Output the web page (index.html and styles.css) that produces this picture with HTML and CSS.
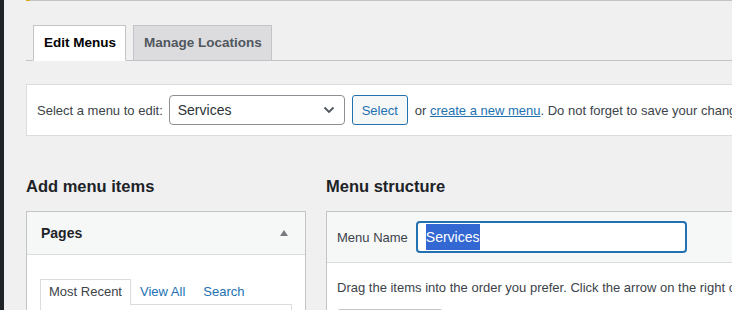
FILE: index.html
```html
<!DOCTYPE html>
<html lang="en">
<head>
    <meta charset="UTF-8">
    <meta name="viewport" content="width=device-width, initial-scale=1.0">
    <title>Menus</title>
    <link rel="stylesheet" href="styles.css">
</head>
<body>
    <div class="admin">
        <div class="admin-edge"></div>

        <div class="wrap">
            <!-- bottom edge of the notice above -->
            <div class="notice-edge"></div>

            <nav class="nav-tabs">
                <a class="nav-tab active" href="#">Edit Menus</a>
                <a class="nav-tab" href="#">Manage Locations</a>
            </nav>

            <div class="manage-menus">
                <span class="select-label">Select a menu to edit:</span>
                <div class="select-box">
                    <span>Services</span>
                    <svg width="12" height="8" viewBox="0 0 12 8"><path d="M1.5 1.5 L6 6 L10.5 1.5" fill="none" stroke="#50575e" stroke-width="1.8"/></svg>
                </div>
                <button class="btn-select">Select</button>
                <span class="manage-text">or <a href="#">create a new menu</a>. Do not forget to save your changes!</span>
            </div>

            <div class="columns">
                <!-- Add menu items -->
                <div class="col-left">
                    <h2>Add menu items</h2>
                    <div class="postbox">
                        <div class="postbox-header">
                            <h3>Pages</h3>
                            <span class="toggle-arrow"></span>
                        </div>
                        <div class="postbox-inside">
                            <ul class="tabs">
                                <li class="active">Most Recent</li>
                                <li><a href="#">View All</a></li>
                                <li><a href="#">Search</a></li>
                            </ul>
                            <div class="tab-panel"></div>
                        </div>
                    </div>
                </div>

                <!-- Menu structure -->
                <div class="col-right">
                    <h2>Menu structure</h2>
                    <div class="menu-box">
                        <div class="menu-header">
                            <label>Menu Name</label>
                            <div class="name-input"><span class="selected">Services</span></div>
                        </div>
                        <div class="menu-body">
                            <p>Drag the items into the order you prefer. Click the arrow on the right of the item to reveal additional configuration options.</p>
                            <div class="bulk-btn"></div>
                        </div>
                    </div>
                </div>
            </div>
        </div>
    </div>
</body>
</html>
```

FILE: styles.css
```css
body {
    margin: 0;
    background-color: #f0f0f1;
    color: #3c434a;
    font-family: 'Liberation Sans', Arial, sans-serif;
    font-size: 13px;
    overflow: hidden;
}
a {
    color: #2271b1;
}
.admin {
    display: flex;
    min-height: 310px;
}
.admin-edge {
    width: 4px;
    flex-shrink: 0;
    background-color: #1d2327;
}
.wrap {
    margin-left: 22px;
    width: 900px;
    flex-shrink: 0;
}
.notice-edge {
    height: 1px;
    background-color: #c3c4c7;
    border-left: 4px solid #dba617;
}

/* tabs */
.nav-tabs {
    display: flex;
    gap: 7px;
    margin-top: 24px;
    padding-left: 7px;
    border-bottom: 1px solid #c3c4c7;
}
.nav-tab {
    display: block;
    margin-bottom: -1px;
    padding: 5px 9px 5px 10px;
    line-height: 24px;
    font-size: 13.5px;
    font-weight: 600;
    color: #50575e;
    text-decoration: none;
    background-color: #dcdcde;
    border: 1px solid #c3c4c7;
}
.nav-tab.active {
    color: #000;
    background-color: #fff;
    border-bottom-color: #fff;
}

/* select a menu */
.manage-menus {
    display: flex;
    align-items: center;
    margin-top: 23px;
    padding: 10px;
    background-color: #fff;
    border: 1px solid #dcdcde;
    white-space: nowrap;
}
.select-label {
    margin-right: 6px;
}
.select-box {
    display: flex;
    align-items: center;
    justify-content: space-between;
    box-sizing: border-box;
    width: 176px;
    height: 30px;
    padding: 0 9px 0 8px;
    font-size: 14px;
    color: #2c3338;
    border: 1px solid #8c8f94;
    border-radius: 4px;
}
.btn-select {
    box-sizing: border-box;
    width: 56px;
    height: 30px;
    margin-left: 7px;
    padding: 0;
    font-family: inherit;
    font-size: 13px;
    color: #2271b1;
    background-color: #f6f7f7;
    border: 1px solid #2271b1;
    border-radius: 3px;
}
.manage-text {
    margin-left: 7px;
}

/* columns */
.columns {
    display: flex;
    gap: 20px;
    margin-top: 37px;
}
.col-left {
    width: 280px;
    flex-shrink: 0;
}
.col-right {
    flex: 1;
}
h2 {
    margin: 0 0 12px;
    font-size: 16.5px;
    line-height: 26px;
    font-weight: 600;
    color: #1d2327;
}

/* pages box */
.postbox {
    background-color: #fff;
    border: 1px solid #c3c4c7;
}
.postbox-header {
    display: flex;
    align-items: center;
    justify-content: space-between;
    height: 42px;
    padding: 0 17px 0 14px;
    background-color: #f6f7f7;
    border-bottom: 1px solid #dcdcde;
}
.postbox-header h3 {
    margin: 0;
    font-size: 14px;
    font-weight: 600;
    color: #1d2327;
}
.toggle-arrow {
    width: 0;
    height: 0;
    border-left: 4px solid transparent;
    border-right: 4px solid transparent;
    border-bottom: 6px solid #787c82;
}
.postbox-inside {
    padding: 24px 13px 12px;
}
.tabs {
    display: flex;
    margin: 0;
    padding: 0;
    list-style: none;
}
.tabs li {
    padding: 3px 8px 4px;
    line-height: 17px;
    border: 1px solid transparent;
    border-bottom: none;
}
.tabs li a {
    text-decoration: none;
}
.tabs li.active {
    color: #3c434a;
    border-color: #dcdcde;
    background-color: #fff;
    margin-bottom: -1px;
}
.tab-panel {
    height: 40px;
    border: 1px solid #dcdcde;
}

/* menu structure */
.menu-box {
    background-color: #fff;
    border: 1px solid #c3c4c7;
}
.menu-header {
    display: flex;
    align-items: center;
    gap: 8px;
    padding: 9px 10px;
    background-color: #f6f7f7;
    border-bottom: 1px solid #dcdcde;
}
.menu-header label {
    color: #3c434a;
}
.name-input {
    display: flex;
    align-items: center;
    box-sizing: border-box;
    width: 271px;
    height: 32px;
    padding: 1px 8px;
    background-color: #fff;
    border: 2px solid #2271b1;
    border-radius: 4px;
}
.selected {
    line-height: 26px;
    font-size: 14px;
    color: #fff;
    background-color: #3367d1;
}
.menu-body {
    padding: 15px 10px 13px;
}
.menu-body p {
    margin: 0 0 11px;
    line-height: 20px;
    white-space: nowrap;
}
.bulk-btn {
    width: 104px;
    height: 30px;
    border: 1px solid #c3c4c7;
    border-radius: 3px;
}
```
